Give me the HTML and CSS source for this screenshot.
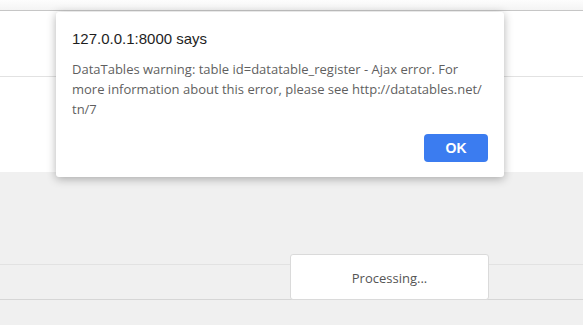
FILE: index.html
```html
<!DOCTYPE html>
<html lang="en">
<head>
    <meta charset="UTF-8">
    <meta name="viewport" content="width=device-width, initial-scale=1.0">
    <title>Register</title>
    <link rel="stylesheet" href="styles.css">
</head>
<body>
    <div class="topbar"></div>

    <div class="panel">
        <div class="panel-head"></div>
    </div>

    <div class="content">
        <div class="table-row"></div>
        <div class="processing">Processing...</div>
    </div>

    <!-- Browser alert box -->
    <div class="dialog">
        <h2 class="dialog-title">127.0.0.1:8000 says</h2>
        <p class="dialog-text">DataTables warning: table id=datatable_register - Ajax error. For more information about this error, please see http://datatables.net/<wbr>tn/7</p>
        <div class="dialog-actions">
            <button class="ok-button">OK</button>
        </div>
    </div>
</body>
</html>
```
FILE: styles.css
```css
body {
    margin: 0;
    font-family: "Liberation Sans", Arial, sans-serif;
    background-color: #f0f0f0;
    position: relative;
    height: 325px;
    overflow: hidden;
}
.topbar {
    height: 10px;
    background: linear-gradient(#fdfdfd, #f4f4f4);
    border-bottom: 1px solid #c6c6c6;
}
.panel {
    background-color: #fff;
    height: 161px;
}
.panel-head {
    height: 65px;
    border-bottom: 1px solid #e2e2e2;
}
.content {
    position: relative;
    padding-top: 92px;
}
.table-row {
    height: 34px;
    border-top: 1px solid #e2e2e2;
    border-bottom: 1px solid #d6d6d6;
}
.processing {
    position: absolute;
    left: 290px;
    top: 82px;
    width: 197px;
    height: 43px;
    background-color: #fff;
    border: 1px solid #dadada;
    border-radius: 3px;
    font-family: "Open Sans", sans-serif;
    font-size: 13px;
    color: #555;
    display: flex;
    align-items: center;
    justify-content: center;
    padding-top: 1px;
    box-sizing: content-box;
}
.dialog {
    position: absolute;
    left: 56px;
    top: 12px;
    width: 448px;
    box-sizing: border-box;
    padding: 17px 16px 15px 16px;
    background-color: #fff;
    border-radius: 3px;
    box-shadow: 0 2px 10px rgba(0, 0, 0, 0.3);
}
.dialog-title {
    margin: 0;
    font-size: 15px;
    font-weight: normal;
    line-height: 20px;
    color: #1e1e1e;
}
.dialog-text {
    margin: 10px 0 0 0;
    font-family: "Open Sans", sans-serif;
    font-size: 13px;
    line-height: 20px;
    color: #5f5f5f;
}
.dialog-actions {
    display: flex;
    justify-content: flex-end;
    margin-top: 15px;
}
.ok-button {
    width: 64px;
    height: 28px;
    border: none;
    border-radius: 4px;
    background-color: #3b7cf0;
    color: #fff;
    font-family: "Liberation Sans", Arial, sans-serif;
    font-weight: bold;
    font-size: 14px;
}
```
